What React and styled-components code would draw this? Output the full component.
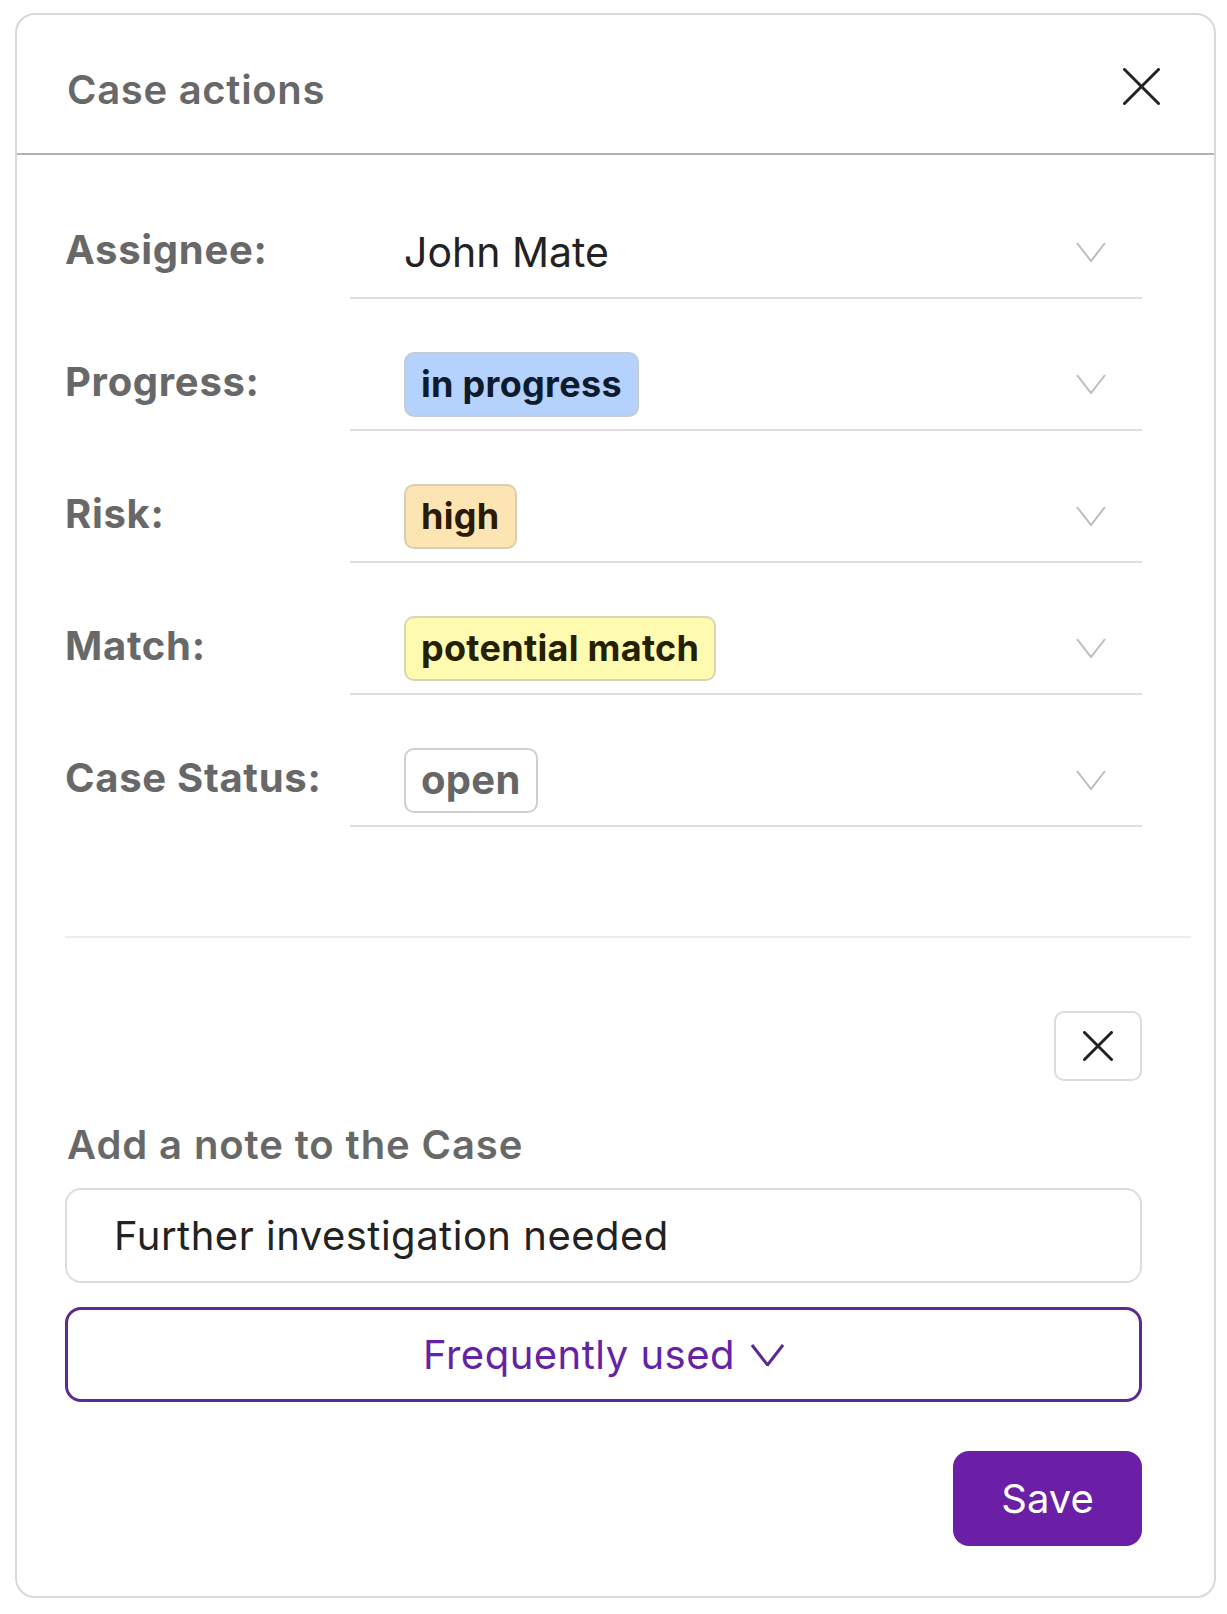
import React from "react";
import styled, { createGlobalStyle } from "styled-components";

const GlobalStyle = createGlobalStyle`
  html, body {
    margin: 0;
    padding: 0;
    background: #ffffff;
  }
  body {
    font-family: Inter, "Noto Sans", "Liberation Sans", sans-serif;
    -webkit-font-smoothing: antialiased;
  }
  * { box-sizing: border-box; }
`;

const Card = styled.div`
  margin: 13px 0 0 15px;
  width: 1201px;
  height: 1585px;
  border: 2px solid #d9d9d9;
  border-radius: 20px;
  background: #fff;
  overflow: hidden;
  display: flex;
  flex-direction: column;
`;

const Header = styled.header`
  display: flex;
  align-items: center;
  justify-content: space-between;
  height: 140px;
  padding: 0 54px 0 50px;
  border-bottom: 2px solid #b3b3b3;
`;

const Title = styled.h1`
  margin: 12px 0 0;
  font-size: 40px;
  line-height: 48px;
  font-weight: 600;
  letter-spacing: 0.7px;
  color: #686868;
`;

const IconButton = styled.button`
  display: flex;
  align-items: center;
  justify-content: center;
  padding: 0;
  margin-top: ${(p) => p.$offset || 0}px;
  width: ${(p) => p.$w}px;
  height: ${(p) => p.$h}px;
  background: #fff;
  border: ${(p) => (p.$bordered ? "2px solid #dcdcdc" : "none")};
  border-radius: 10px;
  cursor: pointer;
`;

const Body = styled.div`
  display: flex;
  flex-direction: column;
  padding: 0 72px 48px 48px;
`;

const Fields = styled.div`
  display: flex;
  flex-direction: column;
  gap: 40px;
  padding-top: 52px;
`;

const FieldRow = styled.div`
  display: grid;
  grid-template-columns: 285px 1fr;
  align-items: center;
`;

const FieldLabel = styled.div`
  font-size: 40px;
  line-height: 48px;
  font-weight: 700;
  letter-spacing: 0.7px;
  color: #686868;
  padding-bottom: 6px;
`;

const Select = styled.div`
  display: flex;
  align-items: center;
  height: 92px;
  padding: 0 36px 0 54px;
  border-bottom: 2px solid #dedede;
`;

const SelectValue = styled.div`
  flex: 1;
  display: flex;
  align-items: center;
`;

const PlainValue = styled.span`
  font-size: 41px;
  line-height: 49px;
  font-weight: 400;
  color: #222;
`;

const tagThemes = {
  blue: { bg: "#b4d2fb", border: "#c4ccd8", color: "#0e1b2c", size: 36 },
  orange: { bg: "#fde5b3", border: "#d9cdb2", color: "#2a1a06", size: 36 },
  yellow: { bg: "#fefbb0", border: "#d9d6b4", color: "#252000", size: 36 },
  neutral: { bg: "#ffffff", border: "#cfcfcf", color: "#666666", size: 40 },
};

const Tag = styled.span`
  display: inline-flex;
  align-items: center;
  height: 65px;
  padding: 0 15px;
  border: 2px solid ${(p) => tagThemes[p.$tone].border};
  border-radius: 10px;
  background: ${(p) => tagThemes[p.$tone].bg};
  color: ${(p) => tagThemes[p.$tone].color};
  font-size: ${(p) => tagThemes[p.$tone].size}px;
  font-weight: 700;
  letter-spacing: 0.3px;
  line-height: 1;
`;

const Divider = styled.hr`
  margin: 109px -49px 0 0;
  border: none;
  height: 2px;
  background: #ededed;
`;

const DismissRow = styled.div`
  display: flex;
  justify-content: flex-end;
  margin-top: 73px;
`;

const NoteTitle = styled.h2`
  margin: 40px 0 0 2px;
  font-size: 40px;
  line-height: 48px;
  font-weight: 600;
  letter-spacing: 0.9px;
  color: #686868;
`;

const NoteInput = styled.input`
  margin-top: 19px;
  width: 100%;
  height: 95px;
  padding: 0 47px;
  border: 2px solid #dcdcdc;
  border-radius: 16px;
  font-family: inherit;
  font-size: 40px;
  font-weight: 400;
  letter-spacing: 0.5px;
  color: #222;
  background: #fff;
  outline: none;
`;

const FrequentButton = styled.button`
  margin-top: 24px;
  width: 100%;
  height: 95px;
  display: flex;
  align-items: center;
  justify-content: center;
  gap: 16px;
  border: 3px solid #5c2a91;
  border-radius: 16px;
  background: #fff;
  color: #6423a6;
  font-family: inherit;
  font-size: 40px;
  font-weight: 400;
  letter-spacing: 0.5px;
  cursor: pointer;
`;

const Actions = styled.div`
  display: flex;
  justify-content: flex-end;
  margin-top: 49px;
`;

const SaveButton = styled.button`
  width: 189px;
  height: 95px;
  border: none;
  border-radius: 16px;
  background: #6a1fa6;
  color: #fff;
  font-family: inherit;
  font-size: 40px;
  font-weight: 400;
  cursor: pointer;
`;

const XIcon = ({ size, stroke = 3, color = "#222" }) => (
  <svg width={size} height={size} viewBox={`0 0 ${size} ${size}`} fill="none">
    <line x1={1.5} y1={1.5} x2={size - 1.5} y2={size - 1.5} stroke={color} strokeWidth={stroke} strokeLinecap="round" />
    <line x1={size - 1.5} y1={1.5} x2={1.5} y2={size - 1.5} stroke={color} strokeWidth={stroke} strokeLinecap="round" />
  </svg>
);

const Chevron = ({ w, h, stroke, color }) => (
  <svg width={w} height={h} viewBox={`0 0 ${w} ${h}`} fill="none">
    <polyline
      points={`1,1 ${w / 2},${h - 1} ${w - 1},1`}
      stroke={color}
      strokeWidth={stroke}
      strokeLinejoin="miter"
      fill="none"
    />
  </svg>
);

const fields = [
  { label: "Assignee:", value: "John Mate" },
  { label: "Progress:", tag: "in progress", tone: "blue" },
  { label: "Risk:", tag: "high", tone: "orange" },
  { label: "Match:", tag: "potential match", tone: "yellow" },
  { label: "Case Status:", tag: "open", tone: "neutral" },
];

export default function App() {
  return (
    <>
      <GlobalStyle />
      <Card>
        <Header>
          <Title>Case actions</Title>
          <IconButton $w={37} $h={37} $offset={5} aria-label="Close">
            <XIcon size={37} stroke={3} />
          </IconButton>
        </Header>
        <Body>
          <Fields>
            {fields.map((f) => (
              <FieldRow key={f.label}>
                <FieldLabel>{f.label}</FieldLabel>
                <Select>
                  <SelectValue>
                    {f.tag ? <Tag $tone={f.tone}>{f.tag}</Tag> : <PlainValue>{f.value}</PlainValue>}
                  </SelectValue>
                  <Chevron w={30} h={20} stroke={2} color="#bdbdbd" />
                </Select>
              </FieldRow>
            ))}
          </Fields>
          <Divider />
          <DismissRow>
            <IconButton $w={88} $h={70} $bordered aria-label="Remove note">
              <XIcon size={30} stroke={3} />
            </IconButton>
          </DismissRow>
          <NoteTitle>Add a note to the Case</NoteTitle>
          <NoteInput defaultValue="Further investigation needed" />
          <FrequentButton>
            Frequently used
            <Chevron w={33} h={22} stroke={3} color="#5c2a91" />
          </FrequentButton>
          <Actions>
            <SaveButton>Save</SaveButton>
          </Actions>
        </Body>
      </Card>
    </>
  );
}
